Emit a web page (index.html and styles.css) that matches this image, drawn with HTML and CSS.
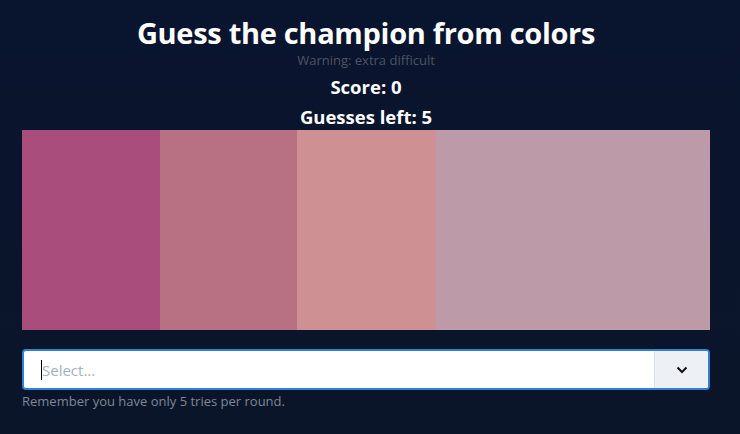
FILE: index.html
```html
<!DOCTYPE html>
<html>
<head>
<meta charset="utf-8">
<link rel="stylesheet" href="styles.css">
</head>
<body>
<main class="page">
  <h1 class="title">Guess the champion from colors</h1>
  <p class="warning">Warning: extra difficult</p>
  <h2 class="stat">Score: 0</h2>
  <h2 class="stat">Guesses left: 5</h2>
  <div class="palette">
    <div class="swatch" style="flex-grow:138;background:#a84d7c"></div>
    <div class="swatch" style="flex-grow:137;background:#b87083"></div>
    <div class="swatch" style="flex-grow:139;background:#cf9093"></div>
    <div class="swatch" style="flex-grow:274;background:#bd9aa8"></div>
  </div>
  <div class="select">
    <div class="control">
      <span class="caret"></span><span class="placeholder">Select...</span>
    </div>
    <div class="indicator">
      <svg width="12" height="8" viewBox="0 0 12 8"><path d="M1.5 1.5 L6 6 L10.5 1.5" fill="none" stroke="#111" stroke-width="2"/></svg>
    </div>
  </div>
  <p class="hint">Remember you have only 5 tries per round.</p>
</main>
</body>
</html>
```
FILE: styles.css
```css
html, body {
  margin: 0;
  padding: 0;
}
body {
  background: linear-gradient(180deg, #09142f 0%, #0b1529 100%);
  min-height: 434px;
  font-family: "Open Sans", "Noto Sans", sans-serif;
  color: #fff;
}
.page {
  display: flex;
  flex-direction: column;
  align-items: center;
  padding: 14px 30px 0 22px;
}
.title {
  margin: 0;
  font-size: 29px;
  line-height: 38px;
  font-weight: 700;
  letter-spacing: -0.3px;
}
.warning {
  margin: 0;
  font-size: 13px;
  line-height: 16px;
  color: #4e5462;
}
.stat {
  margin: 4px 0 0;
  font-size: 18.5px;
  font-weight: 700;
  line-height: 26px;
}
.warning + .stat {
  margin-top: 6px;
}
.palette {
  display: flex;
  align-self: stretch;
  height: 200px;
}
.swatch {
  flex-basis: 0;
}
.select {
  align-self: stretch;
  margin-top: 19px;
  display: flex;
  height: 41px;
  box-sizing: border-box;
  border: 2px solid #2f80d6;
  border-radius: 4px;
  background: #fff;
  overflow: hidden;
}
.control {
  flex: 1;
  display: flex;
  align-items: center;
  padding-left: 17px;
}
.caret {
  width: 1px;
  height: 20px;
  background: #000;
}
.placeholder {
  font-size: 15px;
  color: #a3b1c4;
}
.indicator {
  width: 53px;
  background: #edf1f5;
  border-left: 1px solid #dde3ea;
  display: flex;
  align-items: center;
  justify-content: center;
}
.hint {
  align-self: stretch;
  margin: 2px 0 0;
  font-size: 13px;
  color: #7f8799;
}
```
